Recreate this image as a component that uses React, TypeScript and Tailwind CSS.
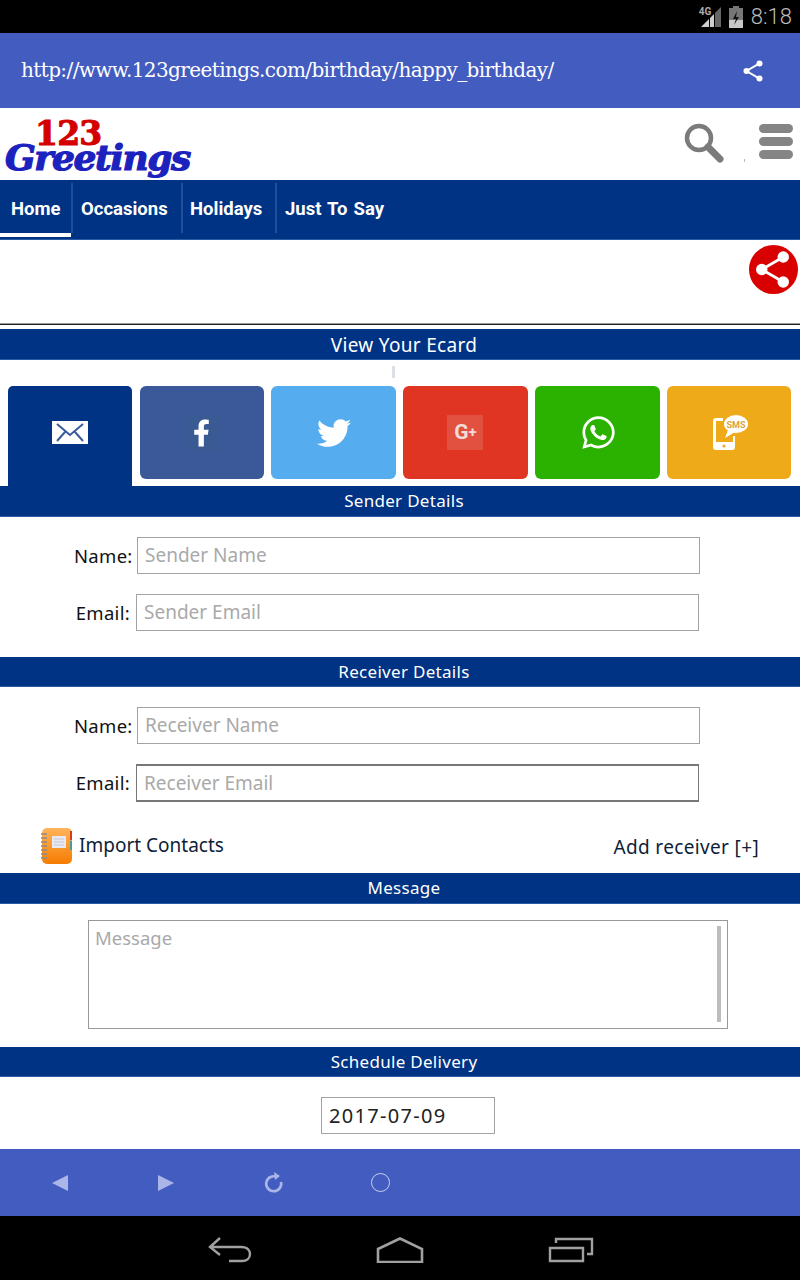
import { FaFacebookF, FaTwitter, FaWhatsapp } from "react-icons/fa"

const bodyFont = "font-['Noto_Sans','Open_Sans',sans-serif]"

function ShareIcon({ className, dot = 3.2, stroke = 1.6 }: { className: string; dot?: number; stroke?: number }) {
  return (
    <svg viewBox="0 0 24 24" className={className} fill="currentColor">
      <path d="M18 5 L6 12 L18 19" fill="none" stroke="currentColor" strokeWidth={stroke} />
      <circle cx="18" cy="5" r={dot} />
      <circle cx="6" cy="12" r={dot} />
      <circle cx="18" cy="19" r={dot} />
    </svg>
  )
}

function SectionBar({ title, big, short }: { title: string; big?: boolean; short?: boolean }) {
  return (
    <div
      className={`flex shrink-0 items-center justify-center border-b border-[#2d5aa5] bg-[#003384] text-white ${bodyFont} ${
        big ? "text-[19px] tracking-[0.3px] pt-[2px]" : "text-[17px] tracking-[0.3px]"
      } ${short ? "h-[30px]" : "h-[31px]"}`}
    >
      <span className="relative left-[4px]">{title}</span>
    </div>
  )
}

function Field({ label, placeholder, offset, dark }: { label: string; placeholder: string; offset: string; dark?: boolean }) {
  return (
    <div className={`flex items-center ${offset} ${dark ? "h-[38px]" : "h-[37px]"}`}>
      <span className="w-[57px] text-right text-[18.5px] tracking-[0.3px] text-[#111]">{label}</span>
      <div
        className={`ml-[6px] flex h-full w-[563px] items-center border px-[7px] text-[19px] text-[#a9a9a9] ${
          dark ? "border-[#777] border-t-2 border-b-2" : "border-[#a3a3a3]"
        }`}
      >
        {placeholder}
      </div>
    </div>
  )
}

function SocialTab({ color, children, active }: { color: string; children: React.ReactNode; active?: boolean }) {
  return (
    <div
      className={`flex items-center justify-center ${color} ${
        active ? "h-[100px] w-[124px] rounded-t-[5px] pb-[7px]" : "h-[93px] w-[124.4px] rounded-[6px]"
      }`}
    >
      {children}
    </div>
  )
}

export default function App() {
  return (
    <div className={`flex h-[1280px] w-[800px] flex-col overflow-hidden bg-white ${bodyFont}`}>
      {/* status bar */}
      <div className="flex h-[33px] shrink-0 items-center justify-end bg-black pr-[8px] text-[#a8a8a8]">
        <div className="relative mr-[6px] h-[22px] w-[24px]">
          <svg viewBox="0 0 24 22" className="h-full w-full">
            <path d="M2 21 L10 13 V21 Z" fill="#cfcfcf" />
            <path d="M11 12 L15 8 V21 H11 Z" fill="#cfcfcf" />
            <path d="M16 7 L22 1 V21 H16 Z" fill="#666" />
          </svg>
          <span className="absolute left-0 top-[-1px] font-['Roboto',sans-serif] text-[10px] font-bold leading-[14px] text-[#aaa]">4G</span>
        </div>
        <svg viewBox="0 0 14 22" className="mr-[8px] h-[22px] w-[14px]">
          <path d="M4 0 H10 V2 H14 V22 H0 V2 H4 Z" fill="#777" />
          <path d="M0 14 H14 V22 H0 Z" fill="#c8c8c8" />
          <path d="M8 5 L4 13 H7 L5 19 L10 11 H7 Z" fill="#111" />
        </svg>
        <span className="font-['Roboto',sans-serif] text-[22px] font-light leading-none text-[#bdbdbd]">8:18</span>
      </div>

      {/* url bar */}
      <div className="flex h-[75px] shrink-0 items-center justify-between bg-[#435cbf] pl-[21px] pr-[34px] text-white">
        <span className="pb-[2px] font-['DejaVu_Serif',serif] text-[20px] tracking-[-0.6px]">http://www.123greetings.com/birthday/happy_birthday/</span>
        <ShareIcon className="h-[26px] w-[26px]" dot={2.8} stroke={1.8} />
      </div>

      {/* logo row */}
      <div className="relative flex h-[72px] shrink-0 items-center justify-between pl-[5px] pr-[7px]">
        <div className="flex h-full w-[190px] flex-col pt-[13px]">
          <span className="ml-[30px] font-['DejaVu_Serif',serif] text-[33px] font-bold leading-[26px] tracking-[-0.8px] text-[#d40000] [-webkit-text-stroke:1px_#d40000]">
            123
          </span>
          <span className="font-['DejaVu_Serif',serif] text-[36px] font-bold italic leading-[20px] tracking-[-1.4px] text-[#1c22bd] [-webkit-text-stroke:1.2px_#1c22bd]">
            Greetings
          </span>
        </div>
        <div className="flex items-start gap-[34px] pb-[2px]">
          <svg viewBox="0 0 42 42" className="h-[42px] w-[42px]">
            <circle cx="16" cy="16" r="12" fill="none" stroke="#7b7b7b" strokeWidth="4.5" />
            <path d="M25 25 L37 37" stroke="#7b7b7b" strokeWidth="7" strokeLinecap="round" />
          </svg>
          <div className="flex w-[34px] flex-col gap-[4px] pt-[2px]">
            <div className="h-[9px] rounded-full bg-[#858585]" />
            <div className="h-[9px] rounded-full bg-[#858585]" />
            <div className="h-[9px] rounded-full bg-[#858585]" />
          </div>
        </div>
        <div className="absolute right-[55px] top-[51px] h-[3px] w-[1px] bg-[#bbb]" />
      </div>

      {/* nav */}
      <div className="flex h-[60px] shrink-0 border-b border-[#2d5aa5] bg-[#003384] font-['Roboto',sans-serif] text-[18.5px] font-bold text-white">
        <div className="flex h-[57px] w-[71px] items-center border-b-4 border-white pl-[11px] pt-[6px]">Home</div>
        <div className="mt-[3px] flex h-[50px] w-[110px] items-center border-l-2 border-[#1c4f9c] pl-[8px] pt-[4px]">Occasions</div>
        <div className="mt-[3px] flex h-[50px] w-[94px] items-center border-l-2 border-[#1c4f9c] pl-[7px] pt-[4px]">Holidays</div>
        <div className="mt-[3px] flex h-[50px] items-center border-l-2 border-[#1c4f9c] pl-[8px] pt-[4px] [word-spacing:1.5px]">Just To Say</div>
      </div>

      {/* share area */}
      <div className="flex h-[83px] shrink-0 justify-end pr-[2px] pt-[5px]">
        <div className="flex h-[49px] w-[49px] items-center justify-center rounded-full bg-[#d80000] pr-[3px] text-white">
          <ShareIcon className="h-[43px] w-[43px] shrink-0" dot={3.2} stroke={1.6} />
        </div>
      </div>
      <div className="mb-[4px] h-[2px] shrink-0 border-t border-[#999] bg-[#222]" />

      <SectionBar title="View Your Ecard" big />

      {/* share tabs */}
      <div className="flex h-[126px] shrink-0 flex-col">
        <div className="ml-[392px] mt-[6px] h-[12px] w-[3px] bg-[#dcdfe8]" />
        <div className="mt-[8px] flex gap-[7.5px] pl-[8px]">
          <SocialTab color="bg-[#003384]" active>
            <svg viewBox="0 0 36 23" className="h-[23px] w-[36px]">
              <rect width="36" height="23" fill="#fff" />
              <path d="M5 3 L18 14 L31 3 M5 20 L13 11 M31 20 L23 11" fill="none" stroke="#3a5a9c" strokeWidth="2" />
            </svg>
          </SocialTab>
          <SocialTab color="bg-[#3b5998]">
            <div className="flex h-[35px] w-[36px] items-center justify-center bg-[#3a5a94] text-white">
              <FaFacebookF className="h-[30px] w-[17px]" />
            </div>
          </SocialTab>
          <SocialTab color="bg-[#55acee]">
            <FaTwitter className="h-[34px] w-[34px] text-white" />
          </SocialTab>
          <SocialTab color="bg-[#e03522]">
            <div className="flex h-[35px] w-[36px] items-center justify-center bg-[#e2503f] font-['Roboto',sans-serif] font-bold leading-none text-[#efdcd9]">
              <span className="text-[21px]">G</span>
              <span className="text-[15px]">+</span>
            </div>
          </SocialTab>
          <SocialTab color="bg-[#2bb200]">
            <FaWhatsapp className="relative left-[1px] h-[37px] w-[37px] text-white" />
          </SocialTab>
          <SocialTab color="bg-[#eeaa18]">
            <svg viewBox="0 0 36 35" className="relative left-[1px] h-[35px] w-[36px]" fill="#fff">
              <path d="M4 3 H11 V6 H4 V27 H21 V21 H23 V32 C23 34 22 35 20 35 H4 C2 35 1 34 1 32 V6 C1 4 2 3 4 3 Z" />
              <circle cx="12" cy="31" r="1.6" fill="#eeaa18" />
              <ellipse cx="24" cy="9" rx="12" ry="9" />
              <path d="M16 15 L13 23 L23 17 Z" />
              <text x="24" y="12.5" textAnchor="middle" fontSize="9" fontWeight="700" fontFamily="Roboto" fill="#d9a441">
                SMS
              </text>
            </svg>
          </SocialTab>
        </div>
      </div>

      <SectionBar title="Sender Details" />
      <div className="flex h-[140px] shrink-0 flex-col gap-[20px] pt-[20px]">
        <Field label="Name:" placeholder="Sender Name" offset="pl-[74px]" />
        <Field label="Email:" placeholder="Sender Email" offset="pl-[73px]" />
      </div>

      <SectionBar title="Receiver Details" short />
      <div className="flex h-[186px] shrink-0 flex-col pt-[20px]">
        <Field label="Name:" placeholder="Receiver Name" offset="pl-[74px]" />
        <div className="mt-[20px]">
          <Field label="Email:" placeholder="Receiver Email" offset="pl-[73px]" dark />
        </div>
        <div className="mt-[26px] flex items-center justify-between pl-[41px] pr-[41px] text-[19px] text-[#0e1d38]">
          <div className="flex items-center gap-[6px]">
            <svg viewBox="0 0 32 36" className="h-[36px] w-[32px]">
              <defs>
                <linearGradient id="book" x1="0" y1="0" x2="0" y2="1">
                  <stop offset="0" stopColor="#ffb45c" />
                  <stop offset="1" stopColor="#f57c00" />
                </linearGradient>
              </defs>
              <rect x="1" width="30" height="36" rx="5" fill="url(#book)" />
              <rect x="11" y="8" width="14" height="12" fill="#e8e8f2" />
              <path d="M13 11 H23 M13 14 H23 M13 17 H23" stroke="#c6c6d6" strokeWidth="1" />
              <path d="M29 3 H31 V12 H29 Z" fill="#d93a1a" />
              <path d="M29 13 H31 V22 H29 Z" fill="#4a9a9a" />
              <path d="M0 6 H6 M0 10 H6 M0 14 H6 M0 18 H6 M0 22 H6 M0 26 H6 M0 30 H6" stroke="#8a8a8a" strokeWidth="1.6" />
            </svg>
            <span className="pb-[2px]">Import Contacts</span>
          </div>
          <span className="pt-[3px] tracking-[0.35px]">Add receiver [+]</span>
        </div>
      </div>

      <SectionBar title="Message" />
      <div className="flex h-[143px] shrink-0 flex-col pl-[88px] pt-[16px]">
        <div className="relative h-[109px] w-[640px] border border-[#999] px-[6px] py-[3px] text-[18.5px] text-[#a9a9a9]">
          Message
          <div className="absolute right-[6px] top-[5px] h-[96px] w-[4px] bg-[#bdbdbd]" />
        </div>
      </div>

      <SectionBar title="Schedule Delivery" short />
      <div className="flex h-[72px] shrink-0 pl-[321px] pt-[20px]">
        <div className="flex h-[37px] w-[174px] items-center border border-[#a3a3a3] pl-[7px] text-[20px] tracking-[1.3px] text-[#222]">2017-07-09</div>
      </div>

      {/* browser controls */}
      <div className="flex h-[67px] shrink-0 items-center bg-[#435cbf] text-[#aab5e8]">
        <svg viewBox="0 0 18 18" className="ml-[51px] h-[18px] w-[18px]" fill="currentColor">
          <path d="M1 9 L17 1 V17 Z" />
        </svg>
        <svg viewBox="0 0 18 18" className="ml-[88px] h-[18px] w-[18px]" fill="currentColor">
          <path d="M1 1 L17 9 L1 17 Z" />
        </svg>
        <svg viewBox="0 0 20 24" className="ml-[89px] h-[24px] w-[20px]" fill="none" stroke="currentColor" strokeWidth="2.6">
          <path d="M13 6 A7.5 7.5 0 1 0 17 11" />
          <path d="M10 1 L16 5 L11 9 Z" fill="currentColor" stroke="none" />
        </svg>
        <div className="ml-[87px] h-[19px] w-[19px] rounded-full border-[1.5px] border-[#c8cfee]" />
      </div>

      {/* android nav */}
      <div className="flex h-[64px] shrink-0 items-start bg-black pt-[21px] text-[#a0a0a0]">
        <svg viewBox="0 0 44 26" className="ml-[208px] h-[26px] w-[44px]" fill="none" stroke="currentColor" strokeWidth="2.4">
          <path d="M12 1 L2 10 L12 18 M2 10 H33 C40 10 42 14 42 17 C42 21 39 24 34 24 H21" />
        </svg>
        <svg viewBox="0 0 48 26" className="ml-[124px] h-[26px] w-[48px]" fill="none" stroke="currentColor" strokeWidth="2.6">
          <path d="M2 12 L24 1.5 L46 12 V25 H2 Z" />
        </svg>
        <svg viewBox="0 0 46 26" className="ml-[124px] h-[26px] w-[46px]" fill="none" stroke="currentColor" strokeWidth="2.4">
          <path d="M2 11 H35 V24 H2 Z M8 6 V2 H44 V17 H39" />
        </svg>
      </div>
    </div>
  )
}
